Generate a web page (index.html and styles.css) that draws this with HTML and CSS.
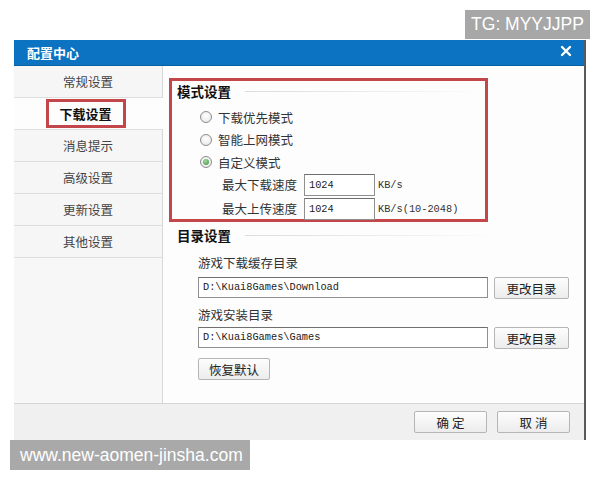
FILE: index.html
```html
<!DOCTYPE html>
<html lang="zh-CN">
<head>
    <meta charset="UTF-8">
    <title>配置中心</title>
    <link rel="stylesheet" href="styles.css">
</head>
<body>
    <div class="top-strip">
        <div class="tag">TG: MYYJJPP</div>
    </div>

    <div class="dialog">
        <div class="titlebar">
            <span class="title">配置中心</span>
            <svg class="close" width="12" height="12" viewBox="0 0 12 12">
                <path d="M2 2 L10 10 M10 2 L2 10" stroke="#fff" stroke-width="2.4" stroke-linecap="round"/>
            </svg>
        </div>

        <div class="dialog-body">
            <ul class="side-menu">
                <li>常规设置</li>
                <li class="active"><span class="mark">下载设置</span></li>
                <li>消息提示</li>
                <li>高级设置</li>
                <li>更新设置</li>
                <li>其他设置</li>
            </ul>

            <div class="content">
                <div class="mode-box">
                    <div class="group-title">模式设置</div>
                    <div class="radio-list">
                        <label class="radio"><span class="dot"></span>下载优先模式</label>
                        <label class="radio"><span class="dot"></span>智能上网模式</label>
                        <label class="radio"><span class="dot checked"></span>自定义模式</label>
                    </div>
                    <div class="speed-row">
                        <span class="speed-label">最大下载速度</span>
                        <span class="field small">1024</span>
                        <span class="unit">KB/s</span>
                    </div>
                    <div class="speed-row">
                        <span class="speed-label">最大上传速度</span>
                        <span class="field small">1024</span>
                        <span class="unit">KB/s(10-2048)</span>
                    </div>
                </div>

                <div class="group-title outer">目录设置</div>
                <div class="dir-block">
                    <div class="dir-label">游戏下载缓存目录</div>
                    <div class="dir-row">
                        <span class="field path">D:\Kuai8Games\Download</span>
                        <button class="btn">更改目录</button>
                    </div>
                    <div class="dir-label second">游戏安装目录</div>
                    <div class="dir-row">
                        <span class="field path">D:\Kuai8Games\Games</span>
                        <button class="btn">更改目录</button>
                    </div>
                    <button class="btn reset">恢复默认</button>
                </div>
            </div>
        </div>

        <div class="footer">
            <button class="btn wide">确 定</button>
            <button class="btn wide">取 消</button>
        </div>
    </div>

    <div class="site">www.new-aomen-jinsha.com</div>
</body>
</html>
```

FILE: styles.css
```css
* {
    margin: 0;
    padding: 0;
    box-sizing: border-box;
}

body {
    background-color: #fff;
    font-family: "Noto Sans CJK SC", "Liberation Sans", sans-serif;
    font-size: 12.5px;
    color: #222;
    width: 600px;
    height: 480px;
    overflow: hidden;
}

.top-strip {
    height: 40px;
    display: flex;
    justify-content: flex-end;
    padding: 10px 10px 0 0;
}

.tag {
    background-color: #a7a7a7;
    color: #fff;
    font-family: "Liberation Sans", sans-serif;
    font-size: 17.5px;
    width: 125px;
    height: 29px;
    line-height: 29px;
    text-align: center;
}

.dialog {
    margin-left: 14px;
    width: 572px;
    height: 400px;
    border-right: 2px solid #5a5a5a;
    display: flex;
    flex-direction: column;
}

.titlebar {
    height: 26px;
    background-color: #0b73c1;
    border-bottom: 1px solid #0a5f9f;
    display: flex;
    align-items: center;
    justify-content: space-between;
    padding: 0 12px 0 13px;
}

.title {
    color: #fff;
    font-weight: bold;
    font-size: 13px;
}

.close {
    margin-top: -4px;
}

.dialog-body {
    flex: 1;
    display: flex;
    background-color: #fdfdfd;
}

.side-menu {
    list-style: none;
    width: 149px;
    background-color: #f7f7f7;
    border-right: 1px solid #d8d8d8;
}

.side-menu li {
    height: 32px;
    border-bottom: 1px solid #dedede;
    display: flex;
    align-items: center;
    justify-content: center;
    color: #444;
    background-color: #f6f6f6;
}

.side-menu li.active {
    background-color: #fdfdfd;
    margin-right: -1px;
}

.mark {
    border: 3px solid #c3464b;
    width: 80px;
    height: 29px;
    line-height: 23px;
    text-align: center;
    font-weight: bold;
    font-size: 13px;
    color: #111;
    margin-right: 6px;
}

.content {
    flex: 1;
    padding: 12px 0 0 6px;
}

.mode-box {
    width: 319px;
    height: 144px;
    border: 3px solid #c3464b;
}

.group-title {
    display: flex;
    align-items: center;
    height: 20px;
    padding-left: 5px;
    font-weight: bold;
    font-size: 13.5px;
    color: #111;
}

.group-title::after {
    content: "";
    flex: 1;
    height: 1px;
    margin-left: 14px;
    background: linear-gradient(to right, #dcdcdc, #eeeeee 60%, rgba(238, 238, 238, 0));
}

.group-title.outer {
    margin-top: 3px;
    padding-left: 8px;
    width: 330px;
}

.radio-list {
    margin-top: 5px;
    padding-left: 28px;
}

.radio {
    display: flex;
    align-items: center;
    height: 22.5px;
    color: #333;
}

.dot {
    width: 12px;
    height: 12px;
    border-radius: 50%;
    border: 1px solid #8c8c8c;
    background: radial-gradient(circle at 50% 40%, #ffffff, #e4e4e4);
    margin-right: 6px;
    position: relative;
}

.dot.checked::after {
    content: "";
    position: absolute;
    left: 2px;
    top: 2px;
    width: 6px;
    height: 6px;
    border-radius: 50%;
    background: radial-gradient(circle at 40% 35%, #9ed79c, #3e8f3f);
}

.speed-row {
    display: flex;
    align-items: center;
    padding-left: 50px;
    margin-bottom: 2px;
}

.speed-label {
    width: 82px;
    color: #333;
}

.field {
    display: inline-block;
    height: 22px;
    line-height: 20px;
    border: 1px solid #8f8f8f;
    border-top-color: #6f6f6f;
    background-color: #fff;
    padding-left: 4px;
    font-family: "Liberation Mono", monospace;
    font-size: 10.3px;
    color: #222;
}

.field.small {
    width: 71px;
}

.unit {
    margin-left: 3px;
    font-family: "Liberation Mono", monospace;
    font-size: 10.3px;
    color: #333;
}

.dir-block {
    padding-left: 29px;
}

.dir-label {
    margin-top: 8px;
    height: 20px;
    line-height: 20px;
    color: #333;
}

.dir-label.second {
    margin-top: 6px;
}

.dir-row {
    display: flex;
    gap: 6px;
    margin-top: 4px;
}

.dir-label.second + .dir-row {
    margin-top: 2px;
}

.field.path {
    width: 290px;
    height: 21px;
    line-height: 19px;
}

.btn {
    height: 22px;
    width: 75px;
    border: 1px solid #b5b5b5;
    border-radius: 2px;
    background: linear-gradient(to bottom, #fdfdfd, #ececec);
    font-family: "Noto Sans CJK SC", sans-serif;
    font-size: 12.5px;
    color: #222;
}

.btn.reset {
    width: 72px;
    margin-top: 9px;
}

.footer {
    height: 37px;
    background-color: #f0f0f0;
    border-top: 1px solid #d6d6d6;
    display: flex;
    justify-content: flex-end;
    gap: 10px;
    padding: 7px 14px 0 0;
}

.btn.wide {
    width: 73px;
}

.site {
    margin-left: 10px;
    width: 240px;
    height: 30px;
    line-height: 30px;
    background-color: #a9a9a9;
    color: #fff;
    font-family: "Liberation Sans", sans-serif;
    font-size: 17.5px;
    padding-left: 10px;
}
```
